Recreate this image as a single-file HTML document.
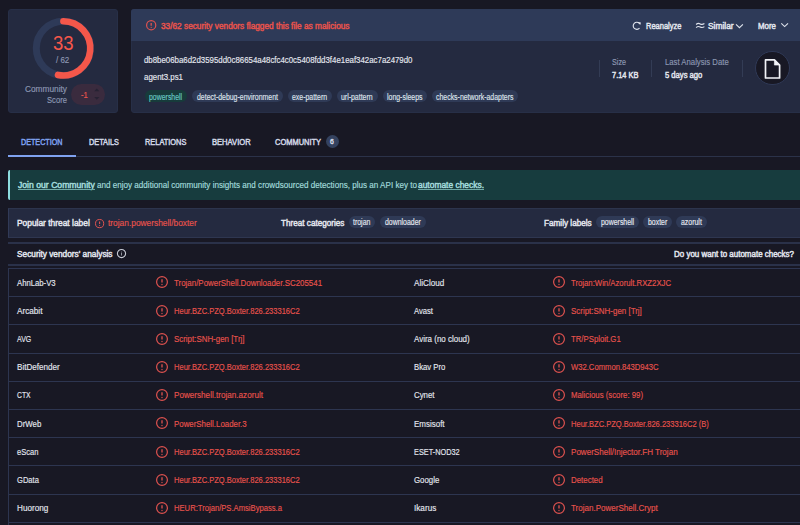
<!DOCTYPE html>
<html><head><meta charset="utf-8">
<style>
*{margin:0;padding:0;box-sizing:border-box}
html,body{width:800px;height:525px;overflow:hidden;background:#181824;font-family:"Liberation Sans",sans-serif;color:#e4e7ef}
.a{position:absolute;white-space:nowrap}
.t{position:absolute;white-space:nowrap;line-height:1;transform-origin:0 0}
</style></head><body>

<div class="a" style="left:8px;top:9px;width:110px;height:104px;background:#242a40;border-radius:3px;border:1px solid #272f47"></div>
<svg class="a" style="left:0;top:0" width="130" height="120"><circle cx="63.4" cy="48.3" r="27.1" fill="none" stroke="#2e3a58" stroke-width="7"/><path d="M63.4 21.2 A27.1 27.1 0 1 1 58.0 74.9" fill="none" stroke="#f5574a" stroke-width="6.6" stroke-linecap="round"/></svg>
<div class="t" style="left:52.50px;top:33.27px;font-size:20px;color:#f5574a;transform:scaleX(0.9260);">33</div>
<div class="t" style="left:56.00px;top:56.48px;font-size:9px;-webkit-text-stroke:0.15px #8d98b3;color:#8d98b3;transform:scaleX(0.8860);">/ 62</div>
<div class="t" style="left:24.70px;top:84.99px;font-size:8.75px;-webkit-text-stroke:0.15px #8d98b3;color:#8d98b3;transform:scaleX(0.9492);">Community</div>
<div class="t" style="left:46.80px;top:95.69px;font-size:8.75px;-webkit-text-stroke:0.15px #8d98b3;color:#8d98b3;transform:scaleX(0.8706);">Score</div>
<div class="a" style="left:71.2px;top:83.6px;width:33.6px;height:21.2px;border-radius:10.6px;background:#3a2b3e"></div>
<div class="t" style="left:81.20px;top:90.90px;font-size:8.5px;-webkit-text-stroke:0.15px #e8534c;color:#e8534c;transform:scaleX(0.8865);">-1</div>
<svg class="a" style="left:0;top:0" width="120" height="120"><path d="M94.2 91.2 L96.8 88.4 L99.4 91.2 Z" fill="#262233"/><path d="M94.2 96.9 L96.8 99.7 L99.4 96.9 Z" fill="#262233"/></svg>
<div class="a" style="left:131px;top:9px;width:700px;height:104px;background:#242a40;border-radius:3px;border:1px solid #272f47"></div>
<div class="a" style="left:131px;top:9px;width:700px;height:32px;background:#2e3a58;border-radius:3px 3px 0 0"></div>
<svg class="a" style="left:144.70px;top:18.95px" width="12.40" height="12.40" viewBox="-6.20 -6.20 12.40 12.40"><circle cx="0" cy="0" r="4.60" fill="none" stroke="#de524f" stroke-width="1.2"/><line x1="0" y1="-2.29" x2="0" y2="0.52" stroke="#de524f" stroke-width="1.32"/><circle cx="0" cy="2.18" r="0.66" fill="#de524f"/></svg>
<div class="t" style="left:161.30px;top:22.19px;font-size:8.75px;-webkit-text-stroke:0.45px #e8534c;color:#e8534c;transform:scaleX(0.9453);">33/62 security vendors flagged this file as malicious</div>
<svg class="a" style="left:0;top:0" width="800" height="40"><path d="M639.35 23.25 A3.6 3.6 0 1 0 639.5 28.2" fill="none" stroke="#dfe3ec" stroke-width="1.15"/><path d="M638.0 22.3 L640.9 22.6 L640.2 25.0 Z" fill="#eef0f5"/><path d="M696.1 24.5 C697.5 23.2 698.9 23.2 700.2 23.9 C701.5 24.6 702.9 24.6 704.4 23.5" fill="none" stroke="#dfe3ec" stroke-width="1.1"/><path d="M696.1 27.6 C697.5 26.3 698.9 26.3 700.2 27.0 C701.5 27.7 702.9 27.7 704.4 26.6" fill="none" stroke="#dfe3ec" stroke-width="1.1"/><path d="M736 24.3 L739.45 27.7 L742.9 24.3" fill="none" stroke="#dfe3ec" stroke-width="1.1"/><path d="M781.3 23.3 L784.65 26.6 L788 23.3" fill="none" stroke="#dfe3ec" stroke-width="1.1"/></svg>
<div class="t" style="left:645.80px;top:21.99px;font-size:8.75px;-webkit-text-stroke:0.45px #e4e7ef;color:#e4e7ef;transform:scaleX(0.8574);">Reanalyze</div>
<div class="t" style="left:707.50px;top:21.99px;font-size:8.75px;-webkit-text-stroke:0.45px #e4e7ef;color:#e4e7ef;transform:scaleX(0.9575);">Similar</div>
<div class="t" style="left:758.10px;top:21.99px;font-size:8.75px;-webkit-text-stroke:0.45px #e4e7ef;color:#e4e7ef;transform:scaleX(0.8979);">More</div>
<div class="t" style="left:144.00px;top:56.39px;font-size:8.75px;-webkit-text-stroke:0.15px #e4e7ef;color:#e4e7ef;transform:scaleX(0.8987);">db8be06ba6d2d3595dd0c86654a48cfc4c0c5408fdd3f4e1eaf342ac7a2479d0</div>
<div class="t" style="left:144.10px;top:72.84px;font-size:8.75px;-webkit-text-stroke:0.15px #e4e7ef;color:#e4e7ef;transform:scaleX(0.9007);">agent3.ps1</div>
<div class="a" style="left:144.75px;top:90.10px;width:42.50px;height:12.10px;border-radius:6.05px;background:#173b3b"></div>
<div class="t" style="left:149.38px;top:92.79px;font-size:8.4px;-webkit-text-stroke:0.15px #68c9c4;color:#68c9c4;transform:scaleX(0.8276);">powershell</div>
<div class="a" style="left:191.50px;top:90.10px;width:91.60px;height:12.10px;border-radius:6.05px;background:#2f3a56"></div>
<div class="t" style="left:196.72px;top:92.79px;font-size:8.4px;-webkit-text-stroke:0.15px #dfe3ec;color:#dfe3ec;transform:scaleX(0.8276);">detect-debug-environment</div>
<div class="a" style="left:287.75px;top:90.10px;width:44.15px;height:12.10px;border-radius:6.05px;background:#2f3a56"></div>
<div class="t" style="left:292.24px;top:92.79px;font-size:8.4px;-webkit-text-stroke:0.15px #dfe3ec;color:#dfe3ec;transform:scaleX(0.8276);">exe-pattern</div>
<div class="a" style="left:336.66px;top:90.10px;width:41.14px;height:12.10px;border-radius:6.05px;background:#2f3a56"></div>
<div class="t" style="left:341.39px;top:92.79px;font-size:8.4px;-webkit-text-stroke:0.15px #dfe3ec;color:#dfe3ec;transform:scaleX(0.8276);">url-pattern</div>
<div class="a" style="left:382.90px;top:90.10px;width:44.60px;height:12.10px;border-radius:6.05px;background:#2f3a56"></div>
<div class="t" style="left:387.42px;top:92.79px;font-size:8.4px;-webkit-text-stroke:0.15px #dfe3ec;color:#dfe3ec;transform:scaleX(0.8276);">long-sleeps</div>
<div class="a" style="left:431.60px;top:90.10px;width:86.80px;height:12.10px;border-radius:6.05px;background:#2f3a56"></div>
<div class="t" style="left:436.17px;top:92.79px;font-size:8.4px;-webkit-text-stroke:0.15px #dfe3ec;color:#dfe3ec;transform:scaleX(0.8276);">checks-network-adapters</div>
<div class="a" style="left:598.5px;top:60px;width:1px;height:17px;background:#333c55"></div>
<div class="a" style="left:650.8px;top:60px;width:1px;height:17px;background:#333c55"></div>
<div class="a" style="left:742px;top:60px;width:1px;height:17px;background:#333c55"></div>
<div class="t" style="left:612.25px;top:58.19px;font-size:8.75px;-webkit-text-stroke:0.15px #8d98b3;color:#8d98b3;transform:scaleX(0.8225);">Size</div>
<div class="t" style="left:612.25px;top:70.59px;font-size:8.75px;-webkit-text-stroke:0.45px #e4e7ef;color:#e4e7ef;transform:scaleX(0.8512);">7.14 KB</div>
<div class="t" style="left:664.90px;top:58.19px;font-size:8.75px;-webkit-text-stroke:0.15px #8d98b3;color:#8d98b3;transform:scaleX(0.8849);">Last Analysis Date</div>
<div class="t" style="left:665.00px;top:70.59px;font-size:8.75px;-webkit-text-stroke:0.45px #e4e7ef;color:#e4e7ef;transform:scaleX(0.8725);">5 days ago</div>
<div class="a" style="left:755.2px;top:50.9px;width:34.4px;height:34.4px;border-radius:50%;background:#181824;border:1.2px solid #2f3956"></div>
<svg class="a" style="left:0;top:0" width="800" height="100"><path d="M765.5 59.9 L774.4 59.9 L779.6 65.1 L779.6 78 L765.5 78 Z" fill="none" stroke="#f2f3f7" stroke-width="1.7" stroke-linejoin="round"/><path d="M774.4 59.9 L774.4 65.1 L779.6 65.1 Z" fill="#f2f3f7" stroke="#f2f3f7" stroke-width="0.6" stroke-linejoin="round"/></svg>
<div class="t" style="left:21.00px;top:137.80px;font-size:8.5px;-webkit-text-stroke:0.45px #7fa2f0;color:#7fa2f0;transform:scaleX(0.8450);">DETECTION</div>
<div class="t" style="left:89.00px;top:137.80px;font-size:8.5px;-webkit-text-stroke:0.45px #d3d8e6;color:#d3d8e6;transform:scaleX(0.8621);">DETAILS</div>
<div class="t" style="left:144.80px;top:137.80px;font-size:8.5px;-webkit-text-stroke:0.45px #d3d8e6;color:#d3d8e6;transform:scaleX(0.8707);">RELATIONS</div>
<div class="t" style="left:211.60px;top:137.80px;font-size:8.5px;-webkit-text-stroke:0.45px #d3d8e6;color:#d3d8e6;transform:scaleX(0.8927);">BEHAVIOR</div>
<div class="t" style="left:275.40px;top:137.80px;font-size:8.5px;-webkit-text-stroke:0.45px #d3d8e6;color:#d3d8e6;transform:scaleX(0.8796);">COMMUNITY</div>
<div class="a" style="left:325.7px;top:134.7px;width:13.1px;height:13.1px;border-radius:50%;background:#34425f"></div>
<div class="t" style="left:329.92px;top:138.25px;font-size:7.5px;-webkit-text-stroke:0.45px #d3d8e6;color:#d3d8e6;transform:scaleX(0.9000);">6</div>
<div class="a" style="left:8px;top:155.8px;width:800px;height:1px;background:#2b3249"></div>
<div class="a" style="left:8px;top:155px;width:68px;height:2px;background:#7fa2f0"></div>
<div class="a" style="left:8px;top:169.8px;width:800px;height:30px;background:#173c3e;border-radius:2px;border-left:2px solid #8edde0"></div>
<div class="t" style="left:18.20px;top:180.84px;font-size:8.75px;-webkit-text-stroke:0.45px #a4dcdd;color:#a4dcdd;transform:scaleX(0.9871);">Join our Community</div>
<div class="a" style="left:18.2px;top:189.2px;width:77px;height:0.8px;background:#6fa9a6"></div>
<div class="t" style="left:96.80px;top:180.84px;font-size:8.75px;-webkit-text-stroke:0.15px #a4dcdd;color:#a4dcdd;transform:scaleX(0.9253);">and enjoy additional community insights and crowdsourced detections, plus an API key to</div>
<div class="t" style="left:418.25px;top:180.84px;font-size:8.75px;-webkit-text-stroke:0.45px #a4dcdd;color:#a4dcdd;transform:scaleX(0.9624);">automate checks.</div>
<div class="a" style="left:418.25px;top:189.2px;width:66px;height:0.8px;background:#6fa9a6"></div>
<div class="a" style="left:8px;top:207.6px;width:800px;height:30.4px;background:#242a40;border:1px solid #2c344c;border-left-color:#313a57;border-bottom:1.5px solid #2e3650"></div>
<div class="t" style="left:17.25px;top:218.79px;font-size:8.75px;-webkit-text-stroke:0.45px #e4e7ef;color:#e4e7ef;transform:scaleX(0.9587);">Popular threat label</div>
<svg class="a" style="left:93.90px;top:217.70px" width="11.20" height="11.20" viewBox="-5.60 -5.60 11.20 11.20"><circle cx="0" cy="0" r="4.10" fill="none" stroke="#de524f" stroke-width="1.0"/><line x1="0" y1="-2.02" x2="0" y2="0.46" stroke="#de524f" stroke-width="1.10"/><circle cx="0" cy="1.93" r="0.55" fill="#de524f"/></svg>
<div class="t" style="left:107.75px;top:218.79px;font-size:8.75px;-webkit-text-stroke:0.15px #e8534c;color:#e8534c;transform:scaleX(0.9554);">trojan.powershell/boxter</div>
<div class="t" style="left:280.60px;top:218.79px;font-size:8.75px;-webkit-text-stroke:0.45px #e4e7ef;color:#e4e7ef;transform:scaleX(0.9311);">Threat categories</div>
<div class="a" style="left:348.60px;top:216.40px;width:26.80px;height:12.00px;border-radius:6.00px;background:#2f3a56"></div>
<div class="t" style="left:353.30px;top:218.19px;font-size:8.4px;-webkit-text-stroke:0.15px #e6e9f0;color:#e6e9f0;transform:scaleX(0.8276);">trojan</div>
<div class="a" style="left:380.00px;top:216.40px;width:46.40px;height:12.00px;border-radius:6.00px;background:#2f3a56"></div>
<div class="t" style="left:385.23px;top:218.19px;font-size:8.4px;-webkit-text-stroke:0.15px #e6e9f0;color:#e6e9f0;transform:scaleX(0.8276);">downloader</div>
<div class="t" style="left:543.55px;top:218.79px;font-size:8.75px;-webkit-text-stroke:0.45px #e4e7ef;color:#e4e7ef;transform:scaleX(0.9343);">Family labels</div>
<div class="a" style="left:595.75px;top:216.40px;width:43.25px;height:12.00px;border-radius:6.00px;background:#2f3a56"></div>
<div class="t" style="left:600.76px;top:218.19px;font-size:8.4px;-webkit-text-stroke:0.15px #e6e9f0;color:#e6e9f0;transform:scaleX(0.8276);">powershell</div>
<div class="a" style="left:643.00px;top:216.40px;width:29.25px;height:12.00px;border-radius:6.00px;background:#2f3a56"></div>
<div class="t" style="left:647.96px;top:218.19px;font-size:8.4px;-webkit-text-stroke:0.15px #e6e9f0;color:#e6e9f0;transform:scaleX(0.8276);">boxter</div>
<div class="a" style="left:676.30px;top:216.40px;width:30.80px;height:12.00px;border-radius:6.00px;background:#2f3a56"></div>
<div class="t" style="left:681.27px;top:218.19px;font-size:8.4px;-webkit-text-stroke:0.15px #e6e9f0;color:#e6e9f0;transform:scaleX(0.8276);">azorult</div>
<div class="a" style="left:8px;top:241.8px;width:800px;height:2px;background:#2a3149"></div>
<div class="t" style="left:16.50px;top:250.09px;font-size:8.75px;-webkit-text-stroke:0.45px #e4e7ef;color:#e4e7ef;transform:scaleX(0.9467);">Security vendors' analysis</div>
<svg class="a" style="left:116px;top:248.3px" width="11" height="11" viewBox="-5.5 -5.5 11 11"><circle r="4.1" fill="none" stroke="#c9ccd6" stroke-width="1.05"/><line x1="0" y1="-1.0" x2="0" y2="2.0" stroke="#b9bcc6" stroke-width="0.75"/><circle cy="-2.1" r="0.4" fill="#8d909a"/></svg>
<div class="t" style="left:674.35px;top:250.09px;font-size:8.75px;-webkit-text-stroke:0.45px #e4e7ef;color:#e4e7ef;transform:scaleX(0.9104);">Do you want to automate checks?</div>
<div class="a" style="left:8px;top:264.2px;width:800px;height:2px;background:#2a3149"></div>
<div class="a" style="left:8px;top:268px;width:1px;height:260px;background:#2d3550"></div>
<div class="a" style="left:8px;top:268.00px;width:800px;height:1px;background:#2d3550"></div>
<div class="t" style="left:16.75px;top:278.63px;font-size:9.3px;-webkit-text-stroke:0.15px #e4e7ef;color:#e4e7ef;transform:scaleX(0.8305);">AhnLab-V3</div>
<svg class="a" style="left:155.00px;top:275.40px" width="14.00" height="14.00" viewBox="-7.00 -7.00 14.00 14.00"><circle cx="0" cy="0" r="5.40" fill="none" stroke="#de524f" stroke-width="1.2"/><line x1="0" y1="-2.64" x2="0" y2="0.60" stroke="#de524f" stroke-width="1.32"/><circle cx="0" cy="2.52" r="0.66" fill="#de524f"/></svg>
<div class="t" style="left:174.40px;top:278.63px;font-size:9.3px;-webkit-text-stroke:0.15px #e8534c;color:#e8534c;transform:scaleX(0.8518);">Trojan/PowerShell.Downloader.SC205541</div>
<div class="t" style="left:413.70px;top:278.63px;font-size:9.3px;-webkit-text-stroke:0.15px #e4e7ef;color:#e4e7ef;transform:scaleX(0.8749);">AliCloud</div>
<svg class="a" style="left:552.25px;top:275.40px" width="14.00" height="14.00" viewBox="-7.00 -7.00 14.00 14.00"><circle cx="0" cy="0" r="5.40" fill="none" stroke="#de524f" stroke-width="1.2"/><line x1="0" y1="-2.64" x2="0" y2="0.60" stroke="#de524f" stroke-width="1.32"/><circle cx="0" cy="2.52" r="0.66" fill="#de524f"/></svg>
<div class="t" style="left:571.25px;top:278.63px;font-size:9.3px;-webkit-text-stroke:0.15px #e8534c;color:#e8534c;transform:scaleX(0.8333);">Trojan:Win/Azorult.RXZ2XJC</div>
<div class="a" style="left:8px;top:296.20px;width:800px;height:1px;background:#2d3550"></div>
<div class="t" style="left:16.75px;top:306.83px;font-size:9.3px;-webkit-text-stroke:0.15px #e4e7ef;color:#e4e7ef;transform:scaleX(0.8793);">Arcabit</div>
<svg class="a" style="left:155.00px;top:303.60px" width="14.00" height="14.00" viewBox="-7.00 -7.00 14.00 14.00"><circle cx="0" cy="0" r="5.40" fill="none" stroke="#de524f" stroke-width="1.2"/><line x1="0" y1="-2.64" x2="0" y2="0.60" stroke="#de524f" stroke-width="1.32"/><circle cx="0" cy="2.52" r="0.66" fill="#de524f"/></svg>
<div class="t" style="left:174.40px;top:306.83px;font-size:9.3px;-webkit-text-stroke:0.15px #e8534c;color:#e8534c;transform:scaleX(0.8105);">Heur.BZC.PZQ.Boxter.826.233316C2</div>
<div class="t" style="left:413.70px;top:306.83px;font-size:9.3px;-webkit-text-stroke:0.15px #e4e7ef;color:#e4e7ef;transform:scaleX(0.8228);">Avast</div>
<svg class="a" style="left:552.25px;top:303.60px" width="14.00" height="14.00" viewBox="-7.00 -7.00 14.00 14.00"><circle cx="0" cy="0" r="5.40" fill="none" stroke="#de524f" stroke-width="1.2"/><line x1="0" y1="-2.64" x2="0" y2="0.60" stroke="#de524f" stroke-width="1.32"/><circle cx="0" cy="2.52" r="0.66" fill="#de524f"/></svg>
<div class="t" style="left:571.25px;top:306.83px;font-size:9.3px;-webkit-text-stroke:0.15px #e8534c;color:#e8534c;transform:scaleX(0.8551);">Script:SNH-gen [Trj]</div>
<div class="a" style="left:8px;top:324.40px;width:800px;height:1px;background:#2d3550"></div>
<div class="t" style="left:16.75px;top:335.03px;font-size:9.3px;-webkit-text-stroke:0.15px #e4e7ef;color:#e4e7ef;transform:scaleX(0.7520);">AVG</div>
<svg class="a" style="left:155.00px;top:331.80px" width="14.00" height="14.00" viewBox="-7.00 -7.00 14.00 14.00"><circle cx="0" cy="0" r="5.40" fill="none" stroke="#de524f" stroke-width="1.2"/><line x1="0" y1="-2.64" x2="0" y2="0.60" stroke="#de524f" stroke-width="1.32"/><circle cx="0" cy="2.52" r="0.66" fill="#de524f"/></svg>
<div class="t" style="left:174.40px;top:335.03px;font-size:9.3px;-webkit-text-stroke:0.15px #e8534c;color:#e8534c;transform:scaleX(0.8509);">Script:SNH-gen [Trj]</div>
<div class="t" style="left:413.70px;top:335.03px;font-size:9.3px;-webkit-text-stroke:0.15px #e4e7ef;color:#e4e7ef;transform:scaleX(0.8575);">Avira (no cloud)</div>
<svg class="a" style="left:552.25px;top:331.80px" width="14.00" height="14.00" viewBox="-7.00 -7.00 14.00 14.00"><circle cx="0" cy="0" r="5.40" fill="none" stroke="#de524f" stroke-width="1.2"/><line x1="0" y1="-2.64" x2="0" y2="0.60" stroke="#de524f" stroke-width="1.32"/><circle cx="0" cy="2.52" r="0.66" fill="#de524f"/></svg>
<div class="t" style="left:571.25px;top:335.03px;font-size:9.3px;-webkit-text-stroke:0.15px #e8534c;color:#e8534c;transform:scaleX(0.8370);">TR/PSploit.G1</div>
<div class="a" style="left:8px;top:352.60px;width:800px;height:1px;background:#2d3550"></div>
<div class="t" style="left:16.75px;top:363.23px;font-size:9.3px;-webkit-text-stroke:0.15px #e4e7ef;color:#e4e7ef;transform:scaleX(0.8705);">BitDefender</div>
<svg class="a" style="left:155.00px;top:360.00px" width="14.00" height="14.00" viewBox="-7.00 -7.00 14.00 14.00"><circle cx="0" cy="0" r="5.40" fill="none" stroke="#de524f" stroke-width="1.2"/><line x1="0" y1="-2.64" x2="0" y2="0.60" stroke="#de524f" stroke-width="1.32"/><circle cx="0" cy="2.52" r="0.66" fill="#de524f"/></svg>
<div class="t" style="left:174.40px;top:363.23px;font-size:9.3px;-webkit-text-stroke:0.15px #e8534c;color:#e8534c;transform:scaleX(0.8105);">Heur.BZC.PZQ.Boxter.826.233316C2</div>
<div class="t" style="left:413.70px;top:363.23px;font-size:9.3px;-webkit-text-stroke:0.15px #e4e7ef;color:#e4e7ef;transform:scaleX(0.8322);">Bkav Pro</div>
<svg class="a" style="left:552.25px;top:360.00px" width="14.00" height="14.00" viewBox="-7.00 -7.00 14.00 14.00"><circle cx="0" cy="0" r="5.40" fill="none" stroke="#de524f" stroke-width="1.2"/><line x1="0" y1="-2.64" x2="0" y2="0.60" stroke="#de524f" stroke-width="1.32"/><circle cx="0" cy="2.52" r="0.66" fill="#de524f"/></svg>
<div class="t" style="left:571.25px;top:363.23px;font-size:9.3px;-webkit-text-stroke:0.15px #e8534c;color:#e8534c;transform:scaleX(0.8231);">W32.Common.843D943C</div>
<div class="a" style="left:8px;top:380.80px;width:800px;height:1px;background:#2d3550"></div>
<div class="t" style="left:16.75px;top:391.43px;font-size:9.3px;-webkit-text-stroke:0.15px #e4e7ef;color:#e4e7ef;transform:scaleX(0.7285);">CTX</div>
<svg class="a" style="left:155.00px;top:388.20px" width="14.00" height="14.00" viewBox="-7.00 -7.00 14.00 14.00"><circle cx="0" cy="0" r="5.40" fill="none" stroke="#de524f" stroke-width="1.2"/><line x1="0" y1="-2.64" x2="0" y2="0.60" stroke="#de524f" stroke-width="1.32"/><circle cx="0" cy="2.52" r="0.66" fill="#de524f"/></svg>
<div class="t" style="left:174.40px;top:391.43px;font-size:9.3px;-webkit-text-stroke:0.15px #e8534c;color:#e8534c;transform:scaleX(0.8740);">Powershell.trojan.azorult</div>
<div class="t" style="left:413.70px;top:391.43px;font-size:9.3px;-webkit-text-stroke:0.15px #e4e7ef;color:#e4e7ef;transform:scaleX(0.8438);">Cynet</div>
<svg class="a" style="left:552.25px;top:388.20px" width="14.00" height="14.00" viewBox="-7.00 -7.00 14.00 14.00"><circle cx="0" cy="0" r="5.40" fill="none" stroke="#de524f" stroke-width="1.2"/><line x1="0" y1="-2.64" x2="0" y2="0.60" stroke="#de524f" stroke-width="1.32"/><circle cx="0" cy="2.52" r="0.66" fill="#de524f"/></svg>
<div class="t" style="left:571.25px;top:391.43px;font-size:9.3px;-webkit-text-stroke:0.15px #e8534c;color:#e8534c;transform:scaleX(0.8398);">Malicious (score: 99)</div>
<div class="a" style="left:8px;top:409.00px;width:800px;height:1px;background:#2d3550"></div>
<div class="t" style="left:16.75px;top:419.63px;font-size:9.3px;-webkit-text-stroke:0.15px #e4e7ef;color:#e4e7ef;transform:scaleX(0.8430);">DrWeb</div>
<svg class="a" style="left:155.00px;top:416.40px" width="14.00" height="14.00" viewBox="-7.00 -7.00 14.00 14.00"><circle cx="0" cy="0" r="5.40" fill="none" stroke="#de524f" stroke-width="1.2"/><line x1="0" y1="-2.64" x2="0" y2="0.60" stroke="#de524f" stroke-width="1.32"/><circle cx="0" cy="2.52" r="0.66" fill="#de524f"/></svg>
<div class="t" style="left:174.40px;top:419.63px;font-size:9.3px;-webkit-text-stroke:0.15px #e8534c;color:#e8534c;transform:scaleX(0.8471);">PowerShell.Loader.3</div>
<div class="t" style="left:413.70px;top:419.63px;font-size:9.3px;-webkit-text-stroke:0.15px #e4e7ef;color:#e4e7ef;transform:scaleX(0.8582);">Emsisoft</div>
<svg class="a" style="left:552.25px;top:416.40px" width="14.00" height="14.00" viewBox="-7.00 -7.00 14.00 14.00"><circle cx="0" cy="0" r="5.40" fill="none" stroke="#de524f" stroke-width="1.2"/><line x1="0" y1="-2.64" x2="0" y2="0.60" stroke="#de524f" stroke-width="1.32"/><circle cx="0" cy="2.52" r="0.66" fill="#de524f"/></svg>
<div class="t" style="left:571.25px;top:419.63px;font-size:9.3px;-webkit-text-stroke:0.15px #e8534c;color:#e8534c;transform:scaleX(0.8106);">Heur.BZC.PZQ.Boxter.826.233316C2 (B)</div>
<div class="a" style="left:8px;top:437.20px;width:800px;height:1px;background:#2d3550"></div>
<div class="t" style="left:16.75px;top:447.83px;font-size:9.3px;-webkit-text-stroke:0.15px #e4e7ef;color:#e4e7ef;transform:scaleX(0.8096);">eScan</div>
<svg class="a" style="left:155.00px;top:444.60px" width="14.00" height="14.00" viewBox="-7.00 -7.00 14.00 14.00"><circle cx="0" cy="0" r="5.40" fill="none" stroke="#de524f" stroke-width="1.2"/><line x1="0" y1="-2.64" x2="0" y2="0.60" stroke="#de524f" stroke-width="1.32"/><circle cx="0" cy="2.52" r="0.66" fill="#de524f"/></svg>
<div class="t" style="left:174.40px;top:447.83px;font-size:9.3px;-webkit-text-stroke:0.15px #e8534c;color:#e8534c;transform:scaleX(0.8105);">Heur.BZC.PZQ.Boxter.826.233316C2</div>
<div class="t" style="left:413.70px;top:447.83px;font-size:9.3px;-webkit-text-stroke:0.15px #e4e7ef;color:#e4e7ef;transform:scaleX(0.7878);">ESET-NOD32</div>
<svg class="a" style="left:552.25px;top:444.60px" width="14.00" height="14.00" viewBox="-7.00 -7.00 14.00 14.00"><circle cx="0" cy="0" r="5.40" fill="none" stroke="#de524f" stroke-width="1.2"/><line x1="0" y1="-2.64" x2="0" y2="0.60" stroke="#de524f" stroke-width="1.32"/><circle cx="0" cy="2.52" r="0.66" fill="#de524f"/></svg>
<div class="t" style="left:571.25px;top:447.83px;font-size:9.3px;-webkit-text-stroke:0.15px #e8534c;color:#e8534c;transform:scaleX(0.8669);">PowerShell/Injector.FH Trojan</div>
<div class="a" style="left:8px;top:465.40px;width:800px;height:1px;background:#2d3550"></div>
<div class="t" style="left:16.75px;top:476.03px;font-size:9.3px;-webkit-text-stroke:0.15px #e4e7ef;color:#e4e7ef;transform:scaleX(0.8129);">GData</div>
<svg class="a" style="left:155.00px;top:472.80px" width="14.00" height="14.00" viewBox="-7.00 -7.00 14.00 14.00"><circle cx="0" cy="0" r="5.40" fill="none" stroke="#de524f" stroke-width="1.2"/><line x1="0" y1="-2.64" x2="0" y2="0.60" stroke="#de524f" stroke-width="1.32"/><circle cx="0" cy="2.52" r="0.66" fill="#de524f"/></svg>
<div class="t" style="left:174.40px;top:476.03px;font-size:9.3px;-webkit-text-stroke:0.15px #e8534c;color:#e8534c;transform:scaleX(0.8105);">Heur.BZC.PZQ.Boxter.826.233316C2</div>
<div class="t" style="left:413.70px;top:476.03px;font-size:9.3px;-webkit-text-stroke:0.15px #e4e7ef;color:#e4e7ef;transform:scaleX(0.8436);">Google</div>
<svg class="a" style="left:552.25px;top:472.80px" width="14.00" height="14.00" viewBox="-7.00 -7.00 14.00 14.00"><circle cx="0" cy="0" r="5.40" fill="none" stroke="#de524f" stroke-width="1.2"/><line x1="0" y1="-2.64" x2="0" y2="0.60" stroke="#de524f" stroke-width="1.32"/><circle cx="0" cy="2.52" r="0.66" fill="#de524f"/></svg>
<div class="t" style="left:571.25px;top:476.03px;font-size:9.3px;-webkit-text-stroke:0.15px #e8534c;color:#e8534c;transform:scaleX(0.8503);">Detected</div>
<div class="a" style="left:8px;top:493.60px;width:800px;height:1px;background:#2d3550"></div>
<div class="t" style="left:16.75px;top:504.23px;font-size:9.3px;-webkit-text-stroke:0.15px #e4e7ef;color:#e4e7ef;transform:scaleX(0.8788);">Huorong</div>
<svg class="a" style="left:155.00px;top:501.00px" width="14.00" height="14.00" viewBox="-7.00 -7.00 14.00 14.00"><circle cx="0" cy="0" r="5.40" fill="none" stroke="#de524f" stroke-width="1.2"/><line x1="0" y1="-2.64" x2="0" y2="0.60" stroke="#de524f" stroke-width="1.32"/><circle cx="0" cy="2.52" r="0.66" fill="#de524f"/></svg>
<div class="t" style="left:174.40px;top:504.23px;font-size:9.3px;-webkit-text-stroke:0.15px #e8534c;color:#e8534c;transform:scaleX(0.8216);">HEUR:Trojan/PS.AmsiBypass.a</div>
<div class="t" style="left:413.70px;top:504.23px;font-size:9.3px;-webkit-text-stroke:0.15px #e4e7ef;color:#e4e7ef;transform:scaleX(0.8805);">Ikarus</div>
<svg class="a" style="left:552.25px;top:501.00px" width="14.00" height="14.00" viewBox="-7.00 -7.00 14.00 14.00"><circle cx="0" cy="0" r="5.40" fill="none" stroke="#de524f" stroke-width="1.2"/><line x1="0" y1="-2.64" x2="0" y2="0.60" stroke="#de524f" stroke-width="1.32"/><circle cx="0" cy="2.52" r="0.66" fill="#de524f"/></svg>
<div class="t" style="left:571.25px;top:504.23px;font-size:9.3px;-webkit-text-stroke:0.15px #e8534c;color:#e8534c;transform:scaleX(0.8637);">Trojan.PowerShell.Crypt</div>
<div class="a" style="left:8px;top:521.80px;width:800px;height:1px;background:#2d3550"></div>
</body></html>
